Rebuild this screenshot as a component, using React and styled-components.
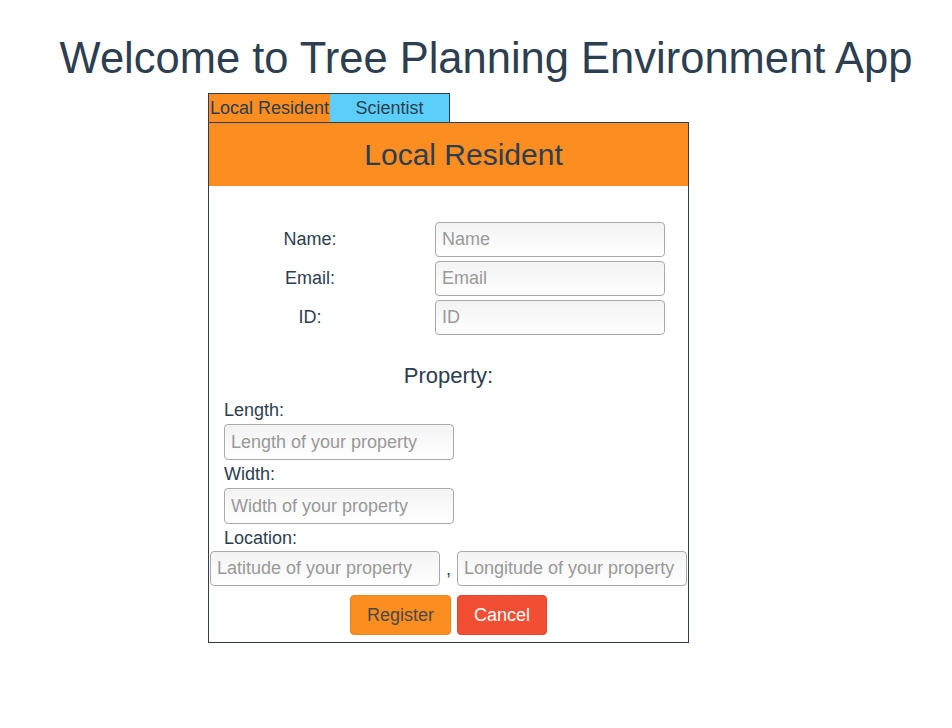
import React from "react";
import styled, { createGlobalStyle } from "styled-components";

const GlobalStyle = createGlobalStyle`
  body {
    margin: 0;
    background: #fff;
    font-family: "Liberation Sans", Arial, sans-serif;
    color: #2c3e50;
  }
`;

const Page = styled.div`
  padding-top: 33px;
`;
const Title = styled.h1`
  margin: 0 0 10px 20px;
  text-align: center;
  font-size: 43.5px;
  font-weight: 400;
  line-height: 50px;
`;
const Wrapper = styled.div`
  margin-left: 208px;
  width: 481px;
`;
const TabBar = styled.div`
  display: flex;
  width: 240px;
  border: 1px solid #2c3e50;
  border-bottom: none;
`;
const Tab = styled.div`
  width: ${(p) => p.w}px;
  height: 28px;
  display: flex;
  align-items: center;
  justify-content: center;
  font-size: 18px;
  white-space: nowrap;
  background: ${(p) => (p.active ? "#fb8d21" : "#5bcefa")};
`;
const Panel = styled.div`
  border: 1px solid #2c3e50;
  padding-bottom: 7px;
`;
const PanelHeader = styled.div`
  height: 63px;
  background: #fb8d21;
  display: flex;
  align-items: center;
  justify-content: center;
  padding-left: 30px;
  font-size: 30px;
`;
const Info = styled.div`
  display: flex;
  flex-direction: column;
  gap: 4px;
  padding-top: 36px;
`;
const InfoRow = styled.div`
  display: flex;
  align-items: center;
`;
const InfoLabel = styled.label`
  width: 202px;
  text-align: center;
  font-size: 18px;
  margin-right: 24px;
`;
const Input = styled.input`
  box-sizing: border-box;
  width: 230px;
  height: ${(p) => p.h || 35}px;
  padding: 0 6px;
  border: 1px solid #a9a9a9;
  border-radius: 4px;
  background: linear-gradient(to bottom, #f3f3f3, #ffffff);
  font-family: inherit;
  font-size: 18px;
  color: #2c3e50;
  &::placeholder {
    color: #999;
  }
`;
const SubTitle = styled.div`
  text-align: center;
  font-size: 22px;
  margin-top: 29px;
  line-height: 24px;
`;
const Fields = styled.div`
  padding: 12px 0 0 15px;
`;
const FieldLabel = styled.div`
  font-size: 18px;
  line-height: 20px;
  margin-bottom: 4px;
`;
const FieldGroup = styled.div`
  margin-bottom: 4px;
`;
const LocationRow = styled.div`
  display: flex;
  align-items: flex-end;
  margin-left: 1px;
  margin-top: -1px;
`;
const Comma = styled.span`
  width: 17px;
  text-align: center;
  font-size: 18px;
  padding-bottom: 6px;
`;
const Buttons = styled.div`
  display: flex;
  justify-content: center;
  gap: 6px;
  margin-top: 9px;
`;
const Button = styled.button`
  height: 40px;
  width: ${(p) => p.w}px;
  border: 1px solid ${(p) => (p.danger ? "#e0472f" : "#e9841f")};
  border-radius: 4px;
  background: ${(p) => (p.danger ? "#f24e34" : "#fb8d21")};
  color: ${(p) => (p.danger ? "#fff" : "#4a4a4a")};
  font-family: inherit;
  font-size: 18px;
`;

export default function App() {
  return (
    <Page>
      <GlobalStyle />
      <Title>Welcome to Tree Planning Environment App</Title>
      <Wrapper>
        <TabBar>
          <Tab w={121} active>Local Resident</Tab>
          <Tab w={119}>Scientist</Tab>
        </TabBar>
        <Panel>
          <PanelHeader>Local Resident</PanelHeader>
          <Info>
            <InfoRow>
              <InfoLabel>Name:</InfoLabel>
              <Input placeholder="Name" />
            </InfoRow>
            <InfoRow>
              <InfoLabel>Email:</InfoLabel>
              <Input placeholder="Email" />
            </InfoRow>
            <InfoRow>
              <InfoLabel>ID:</InfoLabel>
              <Input placeholder="ID" />
            </InfoRow>
          </Info>
          <SubTitle>Property:</SubTitle>
          <Fields>
            <FieldGroup>
              <FieldLabel>Length:</FieldLabel>
              <Input h={36} placeholder="Length of your property" />
            </FieldGroup>
            <FieldGroup>
              <FieldLabel>Width:</FieldLabel>
              <Input h={36} placeholder="Width of your property" />
            </FieldGroup>
            <FieldLabel>Location:</FieldLabel>
          </Fields>
          <LocationRow>
            <Input placeholder="Latitude of your property" />
            <Comma>,</Comma>
            <Input placeholder="Longitude of your property" />
          </LocationRow>
          <Buttons>
            <Button w={101}>Register</Button>
            <Button w={90} danger>Cancel</Button>
          </Buttons>
        </Panel>
      </Wrapper>
    </Page>
  );
}
